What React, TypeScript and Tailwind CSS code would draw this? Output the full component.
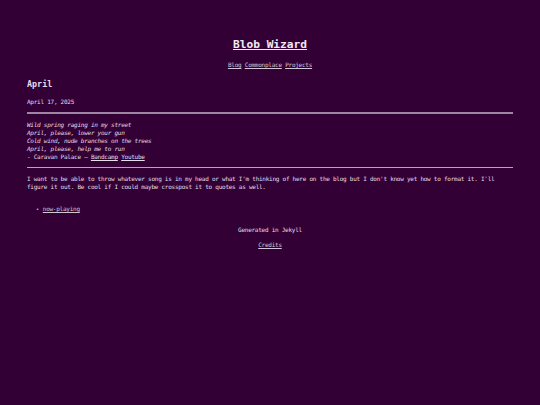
import React from "react"

const mono = "font-['DejaVu_Sans_Mono','Liberation_Mono',monospace]"

export default function App() {
  return (
    <div className={`min-h-[405px] bg-[#330036] text-[#e6dde6] ${mono} text-[6px] tracking-[-0.25px] leading-[8px]`}>
      <div className="px-[27px] pt-[37px] pb-4">
        <header className="text-center">
          <h1 className="text-[11.2px] tracking-normal leading-[16px] font-bold">
            <a className="underline text-[#f2eaf2]">Blob Wizard</a>
          </h1>
          <nav className="mt-[8px] flex justify-center gap-[3.4px] text-[#d2c6d6]">
            <a className="underline">Blog</a>
            <a className="underline">Commonplace</a>
            <a className="underline">Projects</a>
          </nav>
        </header>

        <main className="mt-[9px]">
          <h2 className="text-[8.4px] tracking-normal leading-[12px] font-bold">April</h2>
          <p className="mt-[8px]">April 17, 2025</p>
          <hr className="mt-[6px] border-0 h-[2px] bg-[#9c86a2]" />

          <blockquote className="mt-[7px] italic">
            <p>Wild spring raging in my street</p>
            <p>April, please, lower your gun</p>
            <p>Cold wind, nude branches on the trees</p>
            <p>April, please, help me to run</p>
            <p className="not-italic">
              - Caravan Palace — <a className="underline">Bandcamp</a> <a className="underline">Youtube</a>
            </p>
          </blockquote>
          <hr className="mt-[6px] border-0 h-px bg-[#b8a4bc]" />

          <p className="mt-[7px]">
            I want to be able to throw whatever song is in my head or what I'm thinking of here on the blog but I don't know yet how to format it. I'll figure it out. Be cool if I could maybe crosspost it to quotes as well.
          </p>

          <ul className="mt-[14px] pl-[9px]">
            <li className="flex items-center gap-[4px]">
              <span className="text-[5px]">•</span>
              <a className="underline text-[#d2c6d6]">now-playing</a>
            </li>
          </ul>
        </main>

        <footer className="mt-[13px] text-center">
          <p>Generated in Jekyll</p>
          <p className="mt-[7px]">
            <a className="underline text-[#d2c6d6]">Credits</a>
          </p>
        </footer>
      </div>
    </div>
  )
}
